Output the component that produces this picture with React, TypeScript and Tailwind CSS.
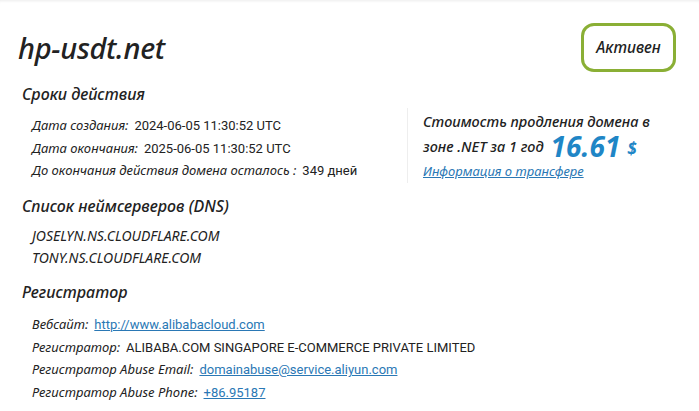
const LABEL = "italic text-[13px] text-[#222]";
const VALUE = "text-[13px] text-[#222] font-['Roboto',sans-serif]";
const LINK = "text-[13px] text-[#2a78b5] underline font-['Roboto',sans-serif]";

function Row({ label, children }: { label: string; children: React.ReactNode }) {
  return (
    <div className="flex items-baseline gap-[6px] h-[22.7px]">
      <span className={LABEL}>{label}</span>
      {children}
    </div>
  );
}

export default function App() {
  return (
    <div className="w-[699px] h-[411px] overflow-hidden bg-white font-['Noto_Sans',sans-serif] text-[#222] shadow-[inset_0_3px_3px_-2px_rgba(0,0,0,0.08)]">
      <div className="flex items-start justify-between pl-[18px] pr-[23px] pt-[23px]">
        <h1 className="italic font-medium text-[29px] leading-none mt-[10px] tracking-[-0.3px]">hp-usdt.net</h1>
        <div className="w-[95px] h-[49px] flex items-center justify-center rounded-[13px] border-[3px] border-[#8aaf35] italic text-[15.5px] font-medium">
          Активен
        </div>
      </div>

      <div className="flex pl-[22px] mt-[14px]">
        <div className="w-[385px]">
          <h2 className="italic font-medium text-[16px] leading-none">Сроки действия</h2>
          <div className="pl-[10px] mt-[14px]">
            <Row label="Дата создания:">
              <span className={VALUE}>2024-06-05 11:30:52 UTC</span>
            </Row>
            <Row label="Дата окончания:">
              <span className={VALUE}>2025-06-05 11:30:52 UTC</span>
            </Row>
            <Row label="До окончания действия домена осталось :">
              <span className={VALUE}>349 дней</span>
            </Row>
          </div>
        </div>
        <div className="mt-[22px] h-[75px] border-l border-[#eee] pl-[15px] pt-[2px]">
          <p className="italic font-medium text-[14.5px] leading-[22px]">Стоимость продления домена в</p>
          <div className="italic font-medium text-[14.5px] h-[30px] flex items-center gap-[7px]">
            <span>зоне .NET за 1 год</span>
            <span className="text-[#1f86c6] font-bold text-[28px] leading-none -mt-[3px]">16.61</span>
            <span className="text-[#1f86c6] font-bold text-[17px] leading-none mt-[2px]">$</span>
          </div>
          <a className="block italic text-[13px] text-[#2a78b5] underline leading-[18px]">Информация о трансфере</a>
        </div>
      </div>

      <div className="pl-[22px] mt-[14px]">
        <h2 className="italic font-medium text-[16px] leading-none">Список неймсерверов (DNS)</h2>
        <div className="pl-[10px] mt-[11px] italic text-[14px]">
          <div className="h-[22px]">JOSELYN.NS.CLOUDFLARE.COM</div>
          <div className="h-[22px]">TONY.NS.CLOUDFLARE.COM</div>
        </div>
        <h2 className="italic font-medium text-[16px] leading-none mt-[15px]">Регистратор</h2>
        <div className="pl-[10px] mt-[15px]">
          <Row label="Вебсайт:">
            <a className={LINK}>http://www.alibabacloud.com</a>
          </Row>
          <Row label="Регистратор:">
            <span className={VALUE}>ALIBABA.COM SINGAPORE E-COMMERCE PRIVATE LIMITED</span>
          </Row>
          <Row label="Регистратор Abuse Email:">
            <a className={LINK}>domainabuse@service.aliyun.com</a>
          </Row>
          <Row label="Регистратор Abuse Phone:">
            <a className={LINK}>+86.95187</a>
          </Row>
        </div>
      </div>
    </div>
  );
}
